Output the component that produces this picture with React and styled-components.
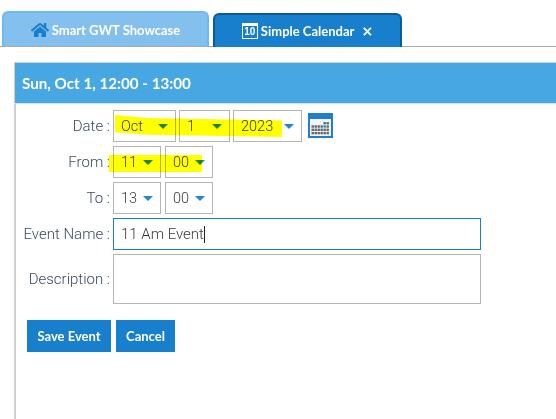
import React from "react";
import styled, { createGlobalStyle } from "styled-components";
import { FaHome } from "react-icons/fa";

const Global = createGlobalStyle`
  html, body { margin: 0; padding: 0; background: #fff; }
  body { width: 556px; height: 419px; overflow: hidden; font-family: Roboto, sans-serif; }
`;

const Page = styled.div`
  width: 556px;
  height: 419px;
  overflow: hidden;
  display: flex;
  flex-direction: column;
`;

const TabBar = styled.div`
  height: 47px;
  box-sizing: border-box;
  padding: 11px 0 0 2px;
  display: flex;
  align-items: flex-end;
  gap: 4px;
  border-bottom: 1px solid #a9a9a9;
`;

const Tab = styled.div`
  box-sizing: border-box;
  width: ${(p) => p.$width}px;
  height: ${(p) => (p.$active ? 34 : 35)}px;
  margin-bottom: ${(p) => (p.$active ? -1 : 0)}px;
  display: flex;
  align-items: center;
  justify-content: center;
  gap: 3px;
  padding-left: ${(p) => (p.$active ? 1 : 0)}px;
  color: #fff;
  font: 700 13px/16px Lato, sans-serif;
  background: ${(p) => (p.$active ? "#177fcc" : "#84c0ee")};
  border: 2px solid ${(p) => (p.$active ? "#0a5a9c" : "#6db9f2")};
  border-bottom: none;
  border-radius: 6px 6px 0 0;
`;

const DayIcon = styled.span`
  box-sizing: border-box;
  width: 16px;
  height: 16px;
  border: 1px solid #fff;
  border-top-width: 3px;
  display: flex;
  align-items: center;
  justify-content: center;
  background: #177fcc;
  color: #fff;
  font: 700 10px/10px "Liberation Sans", sans-serif;
`;

const Close = styled.span`
  margin: 0 1px 0 4px;
  font: 700 14px/12px "DejaVu Sans", sans-serif;
`;

const Panel = styled.div`
  flex: 1;
  margin: 15px 0 0 14px;
  border-left: 2px solid #d0d0d0;
`;

const PanelHeader = styled.div`
  height: 42px;
  margin-left: -1px;
  box-sizing: border-box;
  padding-left: 7px;
  display: flex;
  align-items: center;
  background: #47a7e3;
  border-top: 1px solid #c8d4dc;
  border-bottom: 1px solid #d2e4f0;
  color: #fff;
  font: 700 15.2px/18px Lato, sans-serif;
`;

const Form = styled.div`
  padding-top: 6px;
  display: flex;
  flex-direction: column;
  gap: 4px;
`;

const Row = styled.div`
  position: relative;
  display: flex;
  align-items: ${(p) => (p.$center ? "center" : "flex-start")};
  gap: 3px;
`;

const Label = styled.label`
  box-sizing: border-box;
  width: 94px;
  flex: none;
  text-align: right;
  color: #3a4a5a;
  font: 300 15px/32px Roboto, sans-serif;
`;

const Select = styled.div`
  box-sizing: border-box;
  width: ${(p) => p.$width}px;
  height: 32px;
  margin-left: ${(p) => (p.$push ? 1 : 0)}px;
  padding: 1px 7px 0;
  display: flex;
  align-items: center;
  justify-content: space-between;
  border: 1px solid #b5b5b5;
  color: #3a3a3a;
  font: 300 14.5px/30px Roboto, sans-serif;
`;

const Arrow = styled.span`
  width: 0;
  height: 0;
  border-left: 5px solid transparent;
  border-right: 5px solid transparent;
  border-top: 5px solid #1f86d2;
`;

const CalButton = styled.svg`
  width: 25px;
  height: 25px;
  margin: 3px 0 0 3px;
  display: block;
`;

const TextInput = styled.div`
  box-sizing: border-box;
  width: 368px;
  height: ${(p) => p.$height}px;
  padding: 0 7px;
  display: flex;
  align-items: center;
  border: 1px solid ${(p) => (p.$focus ? "#177fcc" : "#b5b5b5")};
  color: #3a3a3a;
  font: 300 15px/30px Roboto, sans-serif;
`;

const Caret = styled.span`
  width: 1px;
  height: 17px;
  background: #222;
`;

const Marker = styled.div`
  position: absolute;
  left: ${(p) => p.$left}px;
  top: ${(p) => p.$top}px;
  width: ${(p) => p.$width}px;
  height: ${(p) => p.$height}px;
  background: #ffff00;
  mix-blend-mode: multiply;
  clip-path: ${(p) => p.$clip || "none"};
`;

const Actions = styled.div`
  margin: 16px 0 0 11px;
  display: flex;
  gap: 5px;
`;

const Button = styled.button`
  height: 32px;
  width: ${(p) => p.$width}px;
  padding: 0;
  border: none;
  background: #177fcc;
  color: #fff;
  font: 700 13px/16px Lato, sans-serif;
`;

const gridCells = [];
for (let r = 0; r < 4; r++) {
  for (let c = 0; c < 6; c++) {
    if (r === 0 && c < 4) continue;
    gridCells.push([3.5 + c * 3, 9 + r * 3.3]);
  }
}

const CalendarIcon = () => (
  <CalButton viewBox="0 0 25 25">
    <rect width="25" height="25" fill="#1f7fc8" />
    <rect x="2" y="6" width="21" height="17" fill="#f2f5f7" />
    {gridCells.map(([x, y], i) => (
      <rect key={i} x={x} y={y} width="2.4" height="2.4" fill={i === 6 ? "#1f86d2" : "#666"} />
    ))}
  </CalButton>
);

const App = () => (
  <Page>
    <Global />
    <TabBar>
      <Tab $width={207}>
        <FaHome size={18} color="#177fcc" />
        Smart GWT Showcase
      </Tab>
      <Tab $width={189} $active>
        <DayIcon>10</DayIcon>
        Simple Calendar
        <Close>×</Close>
      </Tab>
    </TabBar>
    <Panel>
      <PanelHeader>Sun, Oct 1, 12:00 - 13:00</PanelHeader>
      <Form>
        <Row>
          <Label>Date :</Label>
          <Select $width={63}>Oct<Arrow /></Select>
          <Select $width={51}>1<Arrow /></Select>
          <Select $width={69}>2023<Arrow /></Select>
          <CalendarIcon />
          <Marker $left={99} $top={5} $width={167} $height={22} $clip="polygon(0 0, 20% 14%, 100% 25%, 100% 100%, 20% 90%, 0 78%)" />
        </Row>
        <Row>
          <Label>From :</Label>
          <Select $width={48}>11<Arrow /></Select>
          <Select $width={48} $push>00<Arrow /></Select>
          <Marker $left={93} $top={9} $width={93} $height={17} />
        </Row>
        <Row>
          <Label>To :</Label>
          <Select $width={48}>13<Arrow /></Select>
          <Select $width={48} $push>00<Arrow /></Select>
        </Row>
        <Row>
          <Label>Event Name :</Label>
          <TextInput $height={32} $focus>11 Am Event<Caret /></TextInput>
        </Row>
        <Row $center>
          <Label>Description :</Label>
          <TextInput $height={50} />
        </Row>
      </Form>
      <Actions>
        <Button $width={84}>Save Event</Button>
        <Button $width={59}>Cancel</Button>
      </Actions>
    </Panel>
  </Page>
);

export default App;
